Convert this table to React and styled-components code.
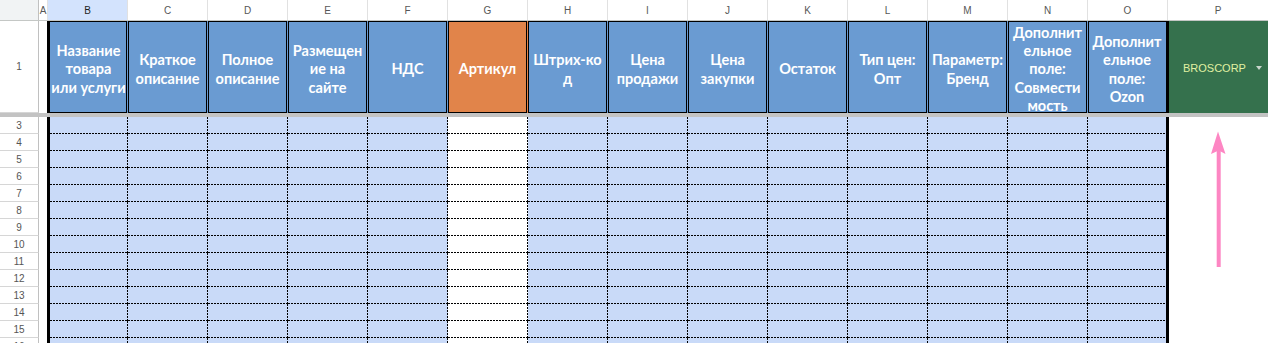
import styled, { createGlobalStyle } from "styled-components";

const GlobalStyle = createGlobalStyle`
    html, body {
        margin: 0;
        padding: 0;
        background: #fff;
        overflow: hidden;
    }
    body {
        font-family: "Liberation Sans", Arial, sans-serif;
    }
`

const BLUE = '#6a9bd2';
const ORANGE = '#e1844a';
const GREEN = '#35714d';
const DATA_BLUE = '#c9daf8';

const Sheet = styled.div`
    position: relative;
    width: 1268px;
    height: 343px;
    overflow: hidden;
`

const LetterRow = styled.div`
    display: flex;
    height: 21px;
    box-sizing: border-box;
    border-bottom: 1px solid #c4c7c5;
`

const Corner = styled.div`
    width: 39px;
    flex: none;
    box-sizing: border-box;
    background: #f1f3f4;
    border-right: 1px solid #c0c0c0;
`

const Letter = styled.div`
    width: ${p => p.$w ? `${p.$w}px` : 'auto'};
    flex: ${p => p.$w ? 'none' : '1'};
    box-sizing: border-box;
    border-right: ${p => p.$w ? '1px solid #e1e1e1' : 'none'};
    display: flex;
    align-items: center;
    justify-content: center;
    font-size: 10px;
    color: ${p => p.$active ? '#1f1f1f' : '#575757'};
    background: ${p => p.$active ? '#d3e3fd' : '#fff'};
`

const HeaderRow = styled.div`
    display: flex;
    height: 92px;
`

const RowNum = styled.div`
    width: 39px;
    flex: none;
    box-sizing: border-box;
    border-right: 1px solid #c0c0c0;
    border-bottom: 1px solid #d6d6d6;
    display: flex;
    align-items: center;
    justify-content: center;
    font-size: 10px;
    color: #555;
    background: #fff;
`

const ColA = styled.div`
    width: 8px;
    flex: none;
    background: #fff;
`

const cellWidth = p => (p.$first || p.$last) ? 81 : 80;

const HeaderCell = styled.div`
    width: ${p => cellWidth(p)}px;
    flex: none;
    box-sizing: border-box;
    background: ${p => p.$bg};
    border-left: ${p => p.$first ? '3px solid #000' : 'none'};
    border-right: ${p => p.$last ? '3px solid #000' : `1px solid ${p.$bg}`};
    box-shadow:
        inset 0 1px #000,
        inset 0 -1px #000
        ${p => p.$first ? '' : ', inset 1px 0 #000'}
        ${p => p.$last ? '' : ', inset -1px 0 #000'};
    padding-top: 5px;
    display: flex;
    flex-direction: column;
    align-items: center;
    justify-content: center;
    font-family: Lato, "Open Sans", sans-serif;
    font-weight: 700;
    font-size: 14.5px;
    line-height: 18.3px;
    color: #fff;
    text-align: center;
    white-space: nowrap;
`

const ChipCell = styled.div`
    flex: 1;
    background: ${GREEN};
    display: flex;
    align-items: center;
    justify-content: space-between;
    padding: 2px 6px 0 14px;
    font-family: "Liberation Sans", Arial, sans-serif;
    font-size: 11px;
    color: #e0f0a2;
`

const Caret = styled.span`
    width: 0;
    height: 0;
    border-left: 3.5px solid transparent;
    border-right: 3.5px solid transparent;
    border-top: 4px solid #c9d6cc;
`

const FreezeBar = styled.div`
    height: 4px;
    background: #c3c3c3;
`

const DataRow = styled.div`
    display: flex;
    height: 17px;
`

const dotsX = 'repeating-linear-gradient(90deg, #000 0 2px, transparent 2px 3px)';
const dotsY = 'repeating-linear-gradient(180deg, #000 0 2px, transparent 2px 3px)';

const DataCell = styled.div`
    width: ${p => cellWidth(p)}px;
    flex: none;
    box-sizing: border-box;
    background-color: ${p => p.$bg};
    border-left: ${p => p.$first ? '3px solid #000' : 'none'};
    border-right: ${p => p.$last ? '3px solid #000' : 'none'};
    background-image: ${p => p.$last ? dotsX : `${dotsX}, ${dotsY}`};
    background-size: 100% 1px, 1px 100%;
    background-position: left bottom, right top;
    background-repeat: no-repeat;
`

const BlankCell = styled.div`
    flex: 1;
    background: #fff;
`

const Arrow = styled.svg`
    position: absolute;
    left: 1208px;
    top: 128px;
`

const headers = [
    { col: 'B', lines: ['Название', 'товара', 'или услуги'] },
    { col: 'C', lines: ['Краткое', 'описание'] },
    { col: 'D', lines: ['Полное', 'описание'] },
    { col: 'E', lines: ['Размещен', 'ие на', 'сайте'] },
    { col: 'F', lines: ['НДС'] },
    { col: 'G', lines: ['Артикул'], orange: true },
    { col: 'H', lines: ['Штрих-ко', 'д'] },
    { col: 'I', lines: ['Цена', 'продажи'] },
    { col: 'J', lines: ['Цена', 'закупки'] },
    { col: 'K', lines: ['Остаток'] },
    { col: 'L', lines: ['Тип цен:', 'Опт'] },
    { col: 'M', lines: ['Параметр:', 'Бренд'] },
    { col: 'N', lines: ['Дополнит', 'ельное', 'поле:', 'Совмести', 'мость'] },
    { col: 'O', lines: ['Дополнит', 'ельное', 'поле:', 'Ozon'] },
];

const rows = [3, 4, 5, 6, 7, 8, 9, 10, 11, 12, 13, 14, 15, 16];

const App = () => {
    const last = headers.length - 1;
    return (
        <>
            <GlobalStyle />
            <Sheet>
                <LetterRow>
                    <Corner />
                    <Letter $w={9}>A</Letter>
                    {headers.map(h => (
                        <Letter key={h.col} $w={80} $active={h.col === 'B'}>{h.col}</Letter>
                    ))}
                    <Letter>P</Letter>
                </LetterRow>

                <HeaderRow>
                    <RowNum>1</RowNum>
                    <ColA />
                    {headers.map((h, i) => (
                        <HeaderCell
                            key={h.col}
                            $bg={h.orange ? ORANGE : BLUE}
                            $first={i === 0}
                            $last={i === last}
                        >
                            {h.lines.map(line => <div key={line}>{line}</div>)}
                        </HeaderCell>
                    ))}
                    <ChipCell>
                        <span>BROSCORP</span>
                        <Caret />
                    </ChipCell>
                </HeaderRow>

                <FreezeBar />

                {rows.map(r => (
                    <DataRow key={r}>
                        <RowNum>{r}</RowNum>
                        <ColA />
                        {headers.map((h, i) => (
                            <DataCell
                                key={h.col}
                                $bg={h.orange ? '#fff' : DATA_BLUE}
                                $first={i === 0}
                                $last={i === last}
                            />
                        ))}
                        <BlankCell />
                    </DataRow>
                ))}

                <Arrow width="22" height="142" viewBox="0 0 22 142">
                    <rect x="8.7" y="20" width="4" height="119" fill="#fd86c3" />
                    <path d="M10 3.5 L17.5 26 L10.7 22.5 L3 26 Z" fill="#fd86c3" />
                </Arrow>
            </Sheet>
        </>
    )
}

export default App;
